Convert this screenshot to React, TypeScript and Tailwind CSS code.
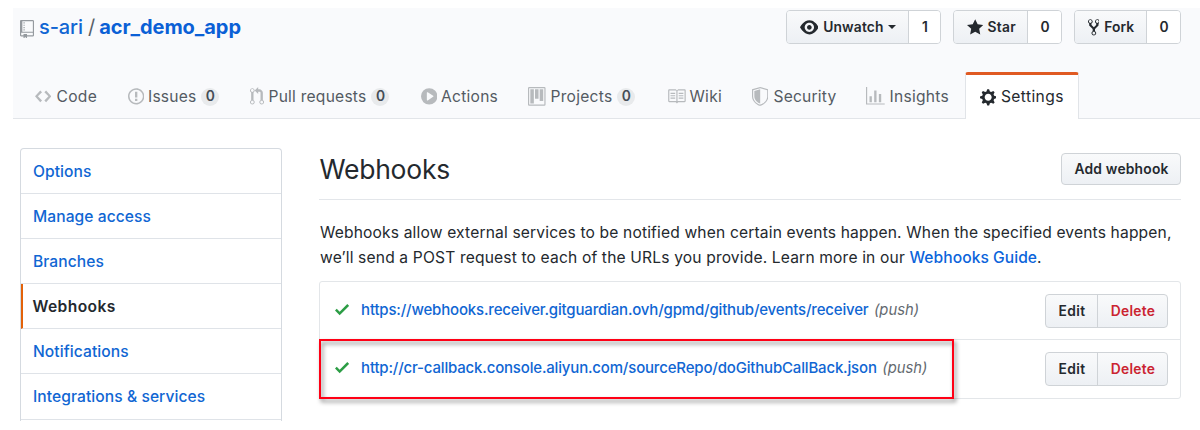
import type { ReactNode } from "react";

const PATHS = {
  repo: "M4 9H3V8h1v1zm0-3H3v1h1V6zm0-2H3v1h1V4zm0-2H3v1h1V2zm8-1v12c0 .55-.45 1-1 1H6v2l-1.5-1.5L3 16v-2H1c-.55 0-1-.45-1-1V1c0-.55.45-1 1-1h10c.55 0 1 .45 1 1zm-1 10H1v2h2v-1h3v1h5v-2zm0-10H2v9h9V1z",
  code: "M9.5 3L8 4.5 11.5 8 8 11.5 9.5 13 14 8 9.5 3zm-5 0L0 8l4.5 5L6 11.5 2.5 8 6 4.5 4.5 3z",
  issue: "M7 2.3c3.14 0 5.7 2.56 5.7 5.7s-2.56 5.7-5.7 5.7A5.71 5.71 0 011.3 8c0-3.14 2.56-5.7 5.7-5.7zM7 1C3.14 1 0 4.14 0 8s3.14 7 7 7 7-3.14 7-7-3.14-7-7-7zm1 3H6v5h2V4zm0 6H6v2h2v-2z",
  pull: "M11 11.28V5c-.03-.78-.34-1.47-.94-2.06C9.46 2.35 8.78 2.03 8 2H7V0L4 3l3 3V4h1c.27.02.48.11.69.31.21.2.3.42.31.69v6.28A1.993 1.993 0 0010 15a1.993 1.993 0 001-3.72zm-1 2.92c-.66 0-1.2-.55-1.2-1.2 0-.65.55-1.2 1.2-1.2.65 0 1.2.55 1.2 1.2 0 .65-.55 1.2-1.2 1.2zM4 3c0-1.11-.89-2-2-2a1.993 1.993 0 00-1 3.72v6.56A1.993 1.993 0 002 15a1.993 1.993 0 001-3.72V4.72c.59-.34 1-.98 1-1.72zm-.8 10c0 .66-.55 1.2-1.2 1.2-.65 0-1.2-.55-1.2-1.2 0-.65.55-1.2 1.2-1.2.65 0 1.2.55 1.2 1.2zM2 4.2C1.34 4.2.8 3.65.8 3c0-.65.55-1.2 1.2-1.2.65 0 1.2.55 1.2 1.2 0 .65-.55 1.2-1.2 1.2z",
  play: "M14 8A7 7 0 110 8a7 7 0 0114 0zm-8.223 3.482l4.599-3.066a.5.5 0 000-.832L5.777 4.518A.5.5 0 005 4.934v6.132a.5.5 0 00.777.416z",
  project: "M10 12h3V2h-3v10zm-4-2h3V2H6v8zm-4 4h3V2H2v12zm-1 1h13V1H1v14zM14 0H1a1 1 0 00-1 1v14a1 1 0 001 1h13a1 1 0 001-1V1a1 1 0 00-1-1z",
  book: "M3 5h4v1H3V5zm0 3h4V7H3v1zm0 2h4V9H3v1zm11-5h-4v1h4V5zm0 2h-4v1h4V7zm0 2h-4v1h4V9zm2-6v9c0 .55-.45 1-1 1H9.5l-1 1-1-1H2c-.55 0-1-.45-1-1V3c0-.55.45-1 1-1h5.5l1 1 1-1H15c.55 0 1 .45 1 1zm-8 .5L7.5 3H2v9h6V3.5zm7-.5H9.5l-.5.5V12h6V3z",
  shield: "M0 2l7-2 7 2v6.02C14 12.69 8.69 16 7 16c-1.69 0-7-3.31-7-7.98V2zm1 .75L7 1l6 1.75v5.268C13 12.104 8.449 15 7 15c-1.449 0-6-2.896-6-6.982V2.75zm1 .75L7 2v12c-1.207 0-5-2.482-5-5.985V3.5z",
  graph: "M16 14v1H0V0h1v14h15zM5 13H3V8h2v5zm4 0H7V3h2v10zm4 0h-2V6h2v7z",
  gear: "M14 8.77v-1.6l-1.94-.64-.45-1.09.88-1.84-1.13-1.13-1.81.91-1.09-.45-.69-1.92h-1.6l-.63 1.94-1.11.45-1.84-.88-1.13 1.13.91 1.81-.45 1.09L0 7.23v1.59l1.94.64.45 1.09-.88 1.84 1.13 1.13 1.81-.91 1.09.45.69 1.92h1.59l.63-1.94 1.11-.45 1.84.88 1.13-1.13-.92-1.81.47-1.09L14 8.75v.02zM7 11c-1.66 0-3-1.34-3-3s1.34-3 3-3 3 1.34 3 3-1.34 3-3 3z",
  eye: "M8.06 2C3 2 0 8 0 8s3 6 8.06 6C13 14 16 8 16 8s-3-6-7.94-6zM8 12c-2.2 0-4-1.78-4-4 0-2.2 1.8-4 4-4 2.22 0 4 1.8 4 4 0 2.22-1.78 4-4 4zm2-4c0 1.11-.89 2-2 2-1.11 0-2-.89-2-2 0-1.11.89-2 2-2 1.11 0 2 .89 2 2z",
  star: "M14 6l-4.9-.64L7 1 4.9 5.36 0 6l3.6 3.26L2.67 14 7 11.67 11.33 14l-.93-4.74L14 6z",
  fork: "M8 1a1.993 1.993 0 00-1 3.72V6L5 8 3 6V4.72A1.993 1.993 0 002 1a1.993 1.993 0 00-1 3.72V6.5l3 3v1.78A1.993 1.993 0 005 15a1.993 1.993 0 001-3.72V9.5l3-3V4.72A1.993 1.993 0 008 1zM2 4.2C1.34 4.2.8 3.65.8 3c0-.65.55-1.2 1.2-1.2.65 0 1.2.55 1.2 1.2 0 .65-.55 1.2-1.2 1.2zm3 10c-.66 0-1.2-.55-1.2-1.2 0-.65.55-1.2 1.2-1.2.65 0 1.2.55 1.2 1.2 0 .65-.55 1.2-1.2 1.2zm3-10c-.66 0-1.2-.55-1.2-1.2 0-.65.55-1.2 1.2-1.2.65 0 1.2.55 1.2 1.2 0 .65-.55 1.2-1.2 1.2z",
  check: "M12 5l-8 8-4-4 1.5-1.5L4 10l6.5-6.5L12 5z",
};

type IconName = keyof typeof PATHS;

function Icon({ name, w, className = "" }: { name: IconName; w: number; className?: string }) {
  const scale = 1.17;
  return (
    <svg
      width={w * scale}
      height={16 * scale}
      viewBox={`0 0 ${w} 16`}
      fill="currentColor"
      fillRule="evenodd"
      className={`shrink-0 ${className}`}
    >
      <path d={PATHS[name]} />
    </svg>
  );
}

const tabs: { icon: IconName; w: number; label: string; box: string; slot: string; text?: string; count?: string }[] = [
  { icon: "code", w: 14, label: "Code", box: "w-[92.5px]", slot: "w-[21.5px]", text: "tracking-[0.3px]" },
  { icon: "issue", w: 14, label: "Issues", box: "w-[122.5px]", slot: "w-[20.5px]", count: "ml-[5px]" },
  { icon: "pull", w: 12, label: "Pull requests", box: "w-[170.5px]", slot: "w-[18.5px]", count: "ml-[5px]", text: "tracking-[0.22px]" },
  { icon: "play", w: 14, label: "Actions", box: "w-[107.5px]", slot: "w-[20.5px]", text: "tracking-[0.25px]" },
  { icon: "project", w: 15, label: "Projects", box: "w-[139px]", slot: "w-[22.5px]", count: "ml-[5px]", text: "tracking-[0.25px]" },
  { icon: "book", w: 16, label: "Wiki", box: "w-[85px]", slot: "w-[22.5px]", text: "tracking-[0.25px]" },
  { icon: "shield", w: 14, label: "Security", box: "w-[114px]", slot: "w-[21.5px]" },
  { icon: "graph", w: 16, label: "Insights", box: "w-[99px]", slot: "w-[23.5px]", text: "tracking-[0.27px]" },
];

function SocialButton({ children, count, main, total }: { children: ReactNode; count: string; main: string; total: string }) {
  return (
    <div className={`flex h-[34px] overflow-hidden rounded-[4px] border border-[#cfd3d7] ${total}`}>
      <div className={`flex items-center border-r border-[#cfd3d7] bg-linear-to-b from-[#f9fafb] to-[#edf0f4] ${main}`}>
        {children}
      </div>
      <div className="flex flex-1 items-center justify-center bg-white pl-px">{count}</div>
    </div>
  );
}

const menu = ["Options", "Manage access", "Branches", "Webhooks", "Notifications", "Integrations & services"];

function HookRow({ url, className, marked = false }: { url: string; className: string; marked?: boolean }) {
  return (
    <div className={`relative flex items-start pl-[15px] pr-[12.5px] ${className}`}>
      <Icon name="check" w={12} className="mt-[17.5px] text-[#2c9d45]" />
      <div className="ml-[12px] mt-[16px] flex items-baseline whitespace-pre text-[15px] leading-[23px]">
        <span className="font-medium tracking-[-0.175px] text-[#1066d3]">{url}</span>
        <span className="ml-[5.5px] text-[14.8px] italic text-[#63696f]">(push)</span>
      </div>
      <div className="ml-auto mt-[12px] flex h-[34px] w-[123px] overflow-hidden rounded-[4px] border border-[#cfd3d7] bg-linear-to-b from-[#f9fafb] to-[#edf0f4] text-[13.8px] font-semibold">
        <span className="flex w-[52px] items-center justify-center border-r border-[#cfd3d7] pl-[2px] tracking-[0.35px]">Edit</span>
        <span className="flex flex-1 items-center justify-center pl-[2px] tracking-[0.3px] text-[#cb2431]">Delete</span>
      </div>
      {marked && (
        <div className="absolute -left-px -top-px h-[60px] w-[635px] border-2 border-[#ff0015] drop-shadow-[2px_3px_2px_rgba(0,0,0,0.5)]" />
      )}
    </div>
  );
}

export default function App() {
  return (
    <div className="h-[430px] w-[1200px] overflow-hidden bg-white font-['Inter','Liberation_Sans',sans-serif] text-[#24292e]">
      <header className="ml-[13px] mt-[8px] flex h-[111px] flex-col border-b border-[#e2e5e9] bg-[#f9fafc]">
        <div className="flex h-[64px] shrink-0 items-start pl-[7px] pt-[2px]">
          <Icon name="repo" w={12} className="mt-[9.5px] text-[#959a9f]" />
          <div className="ml-[5px] mt-[2px] flex text-[20px] leading-[30px]">
            <span className="font-medium tracking-[-0.1px] text-[#1066d3]">s-ari</span>
            <span className="ml-[5px] text-[#586069]">/</span>
            <span className="ml-[4px] font-bold tracking-[-0.05px] text-[#0a60d6]">acr_demo_app</span>
          </div>
          <div className="ml-auto mr-[19px] flex gap-[12px] text-[13.8px] font-semibold">
            <SocialButton count="1" total="w-[155px]" main="w-[122px] pl-[12.5px]">
              <Icon name="eye" w={16} />
              <span className="ml-[5px] tracking-[0.15px]">Unwatch</span>
              <span className="ml-[4px] border-x-[4.5px] border-t-[4.5px] border-x-transparent border-t-current" />
            </SocialButton>
            <SocialButton count="0" total="w-[109px]" main="w-[74px] pl-[12.5px]">
              <Icon name="star" w={14} />
              <span className="ml-[4.5px] tracking-[0.35px]">Star</span>
            </SocialButton>
            <SocialButton count="0" total="w-[107px]" main="w-[72px] pl-[12.5px]">
              <Icon name="fork" w={10} />
              <span className="ml-[5px] tracking-[0.1px]">Fork</span>
            </SocialButton>
          </div>
        </div>
        <nav className="-mb-px flex h-[47px] items-stretch pl-[22px] text-[15.6px]">
          {tabs.map((t) => (
            <div key={t.label} className={`flex shrink-0 items-center pt-[2px] text-[#545b63] ${t.box}`}>
              <span className={`flex shrink-0 ${t.slot}`}>
                <Icon name={t.icon} w={t.w} className="text-[#b7babd]" />
              </span>
              <span className={`whitespace-nowrap ${t.text ?? "tracking-[0.2px]"}`}>{t.label}</span>
              {t.count && (
                <span className={`flex h-[18px] w-[18px] items-center justify-center rounded-full bg-[#e8eaec] text-[13.8px] font-semibold text-[#444d56] ${t.count}`}>
                  0
                </span>
              )}
            </div>
          ))}
          <div className="flex w-[114px] shrink-0 items-center rounded-t-[3px] border-x border-t-[3.5px] border-x-[#e1e4e8] border-t-[#e05a22] bg-white pl-[13.5px]">
            <Icon name="gear" w={14} />
            <span className="ml-[5px] tracking-[0.4px]">Settings</span>
          </div>
        </nav>
      </header>

      <div className="flex items-start pl-[20px] pt-[29px]">
        <aside className="h-[273px] w-[262px] shrink-0 overflow-hidden rounded-t-[4px] border border-b-0 border-[#d5dae0] text-[15.6px]">
          {menu.map((m) =>
            m === "Webhooks" ? (
              <div key={m} className="flex h-[45.1px] items-center border-b border-l-[2.5px] border-b-[#dfe3e8] border-l-[#e36209] pl-[9.5px] font-semibold tracking-[0.38px]">
                {m}
              </div>
            ) : (
              <div key={m} className="flex h-[45.1px] items-center border-b border-[#dfe3e8] pl-[12px] pt-px font-medium tracking-[0.07px] text-[#1066d3]">
                {m}
              </div>
            ),
          )}
        </aside>

        <main className="ml-[37px] w-[862px] shrink-0">
          <div className="flex h-[52px] items-start justify-between border-b border-[#e3e6ea] pl-px">
            <h1 className="-ml-[0.5px] mt-[4px] text-[26.5px] leading-[34px] tracking-[-0.25px]">Webhooks</h1>
            <div className="mt-[5px] flex h-[32px] w-[120px] items-center justify-center rounded-[4px] border border-[#cfd3d7] bg-linear-to-b from-[#f9fafb] to-[#edf0f4] pl-px text-[13.8px] font-semibold tracking-[0.22px]">
              Add webhook
            </div>
          </div>
          <p className="mt-[20px] whitespace-nowrap pl-px text-[15.6px] leading-[25px] tracking-[0.155px]">
            Webhooks allow external services to be notified when certain events happen. When the specified events happen,
            <br />
            we’ll send a POST request to each of the URLs you provide. Learn more in our{" "}
            <span className="font-medium tracking-[0.05px] text-[#0b64db]">Webhooks Guide</span>.
          </p>
          <div className="mt-[11px] rounded-[3px] border border-[#e3e6e9]">
            <HookRow url="https://webhooks.receiver.gitguardian.ovh/gpmd/github/events/receiver" className="h-[58px] border-b border-[#e3e6e9]" />
            <HookRow url="http://cr-callback.console.aliyun.com/sourceRepo/doGithubCallBack.json" className="h-[58px]" marked />
          </div>
        </main>
      </div>
    </div>
  );
}
